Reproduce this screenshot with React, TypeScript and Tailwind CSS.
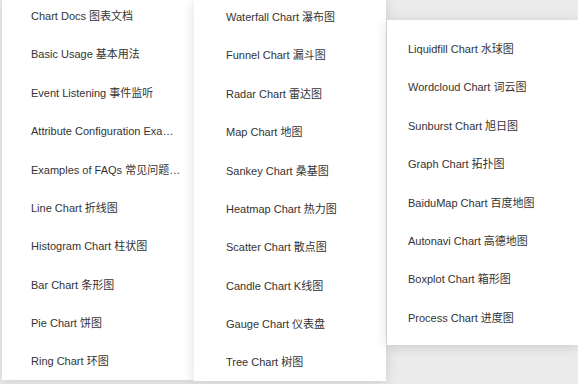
import React from "react";

const col1 = [
  "Chart Docs 图表文档",
  "Basic Usage 基本用法",
  "Event Listening 事件监听",
  "Attribute Configuration Examples 属性配置示例",
  "Examples of FAQs 常见问题示例",
  "Line Chart 折线图",
  "Histogram Chart 柱状图",
  "Bar Chart 条形图",
  "Pie Chart 饼图",
  "Ring Chart 环图",
];
const col2 = [
  "Waterfall Chart 瀑布图",
  "Funnel Chart 漏斗图",
  "Radar Chart 雷达图",
  "Map Chart 地图",
  "Sankey Chart 桑基图",
  "Heatmap Chart 热力图",
  "Scatter Chart 散点图",
  "Candle Chart K线图",
  "Gauge Chart 仪表盘",
  "Tree Chart 树图",
];
const col3 = [
  "Liquidfill Chart 水球图",
  "Wordcloud Chart 词云图",
  "Sunburst Chart 旭日图",
  "Graph Chart 拓扑图",
  "BaiduMap Chart 百度地图",
  "Autonavi Chart 高德地图",
  "Boxplot Chart 箱形图",
  "Process Chart 进度图",
];

const font = { fontFamily: '"Liberation Sans", Arial, "Noto Sans CJK SC", sans-serif' };

function Item({ label }: { label: string }) {
  return (
    <div className="h-[38.4px] flex items-center">
      <span className="block max-w-[151px] overflow-hidden text-ellipsis whitespace-nowrap text-[11px] text-[#333333]">
        {label}
      </span>
    </div>
  );
}

export default function App() {
  return (
    <div
      className="w-[578px] h-[384px] overflow-hidden bg-[#ebebeb] flex items-start"
      style={font}
    >
      <div className="relative z-0 ml-[2px] w-[192px] h-[380px] bg-white overflow-hidden pl-[29px] shadow-[0_2px_12px_rgba(0,0,0,0.12)]">
        <div className="-mt-[3px]">
          {col1.map((t) => (
            <Item key={t} label={t} />
          ))}
        </div>
      </div>
      <div className="relative z-10 w-[192px] h-[381px] bg-white overflow-hidden pl-[32px] shadow-[0_2px_12px_rgba(0,0,0,0.14)]">
        <div className="-mt-[2px]">
          {col2.map((t) => (
            <Item key={t} label={t} />
          ))}
        </div>
      </div>
      <div className="relative z-20 ml-[1px] mt-[20px] w-[191px] h-[325px] bg-white overflow-hidden pl-[21px] pt-[10px] shadow-[0_2px_12px_rgba(0,0,0,0.14)]">
        {col3.map((t) => (
          <Item key={t} label={t} />
        ))}
      </div>
    </div>
  );
}
